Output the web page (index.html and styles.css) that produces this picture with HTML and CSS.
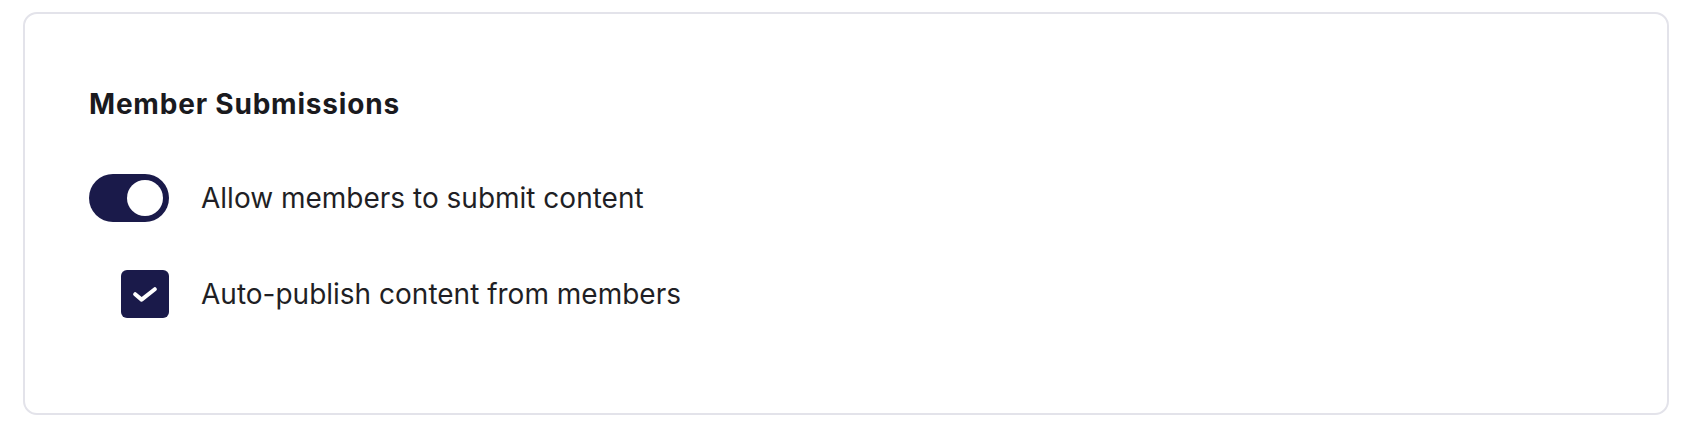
FILE: index.html
```html
<!DOCTYPE html>
<html>
<head>
<meta charset="utf-8">
<link rel="stylesheet" href="styles.css">
</head>
<body>
<div class="card">
  <h2 class="title">Member Submissions</h2>
  <div class="row">
    <span class="toggle"><span class="knob"></span></span>
    <span class="label">Allow members to submit content</span>
  </div>
  <div class="row sub">
    <span class="checkbox">
      <svg width="24" height="15" viewBox="0 0 24 15"><path d="M2.2 7.2L8.6 12.6L21.8 2.2" fill="none" stroke="#fff" stroke-width="4" stroke-linecap="round" stroke-linejoin="round"/></svg>
    </span>
    <span class="label">Auto-publish content from members</span>
  </div>
</div>
</body>
</html>
```
FILE: styles.css
```css
html, body {
  margin: 0;
  background: #ffffff;
}
body {
  padding: 12px 17px 13px 23px;
  font-family: "Inter", "Liberation Sans", sans-serif;
  color: #1e1e24;
}
.card {
  box-sizing: border-box;
  height: 403px;
  border: 2px solid #e3e3ea;
  border-radius: 14px;
  padding: 72px 64px 0 64px;
  display: flex;
  flex-direction: column;
}
.title {
  margin: 0 0 52px 0;
  font-size: 28px;
  line-height: 36px;
  font-weight: 700;
  color: #1a1a1e;
  letter-spacing: 0.8px;
}
.row {
  display: flex;
  align-items: center;
  gap: 32px;
  margin-bottom: 48px;
}
.row.sub {
  padding-left: 32px;
}
.toggle {
  box-sizing: border-box;
  width: 80px;
  height: 48px;
  border-radius: 24px;
  background: #1a1a4a;
  display: flex;
  align-items: center;
  justify-content: flex-end;
  padding-right: 6px;
}
.knob {
  width: 36px;
  height: 36px;
  border-radius: 50%;
  background: #ffffff;
}
.checkbox {
  width: 48px;
  height: 48px;
  border-radius: 6px;
  background: #1a1a4a;
  display: flex;
  align-items: center;
  justify-content: center;
}
.label {
  font-size: 28px;
  line-height: 36px;
  color: #1f1f25;
}
```
